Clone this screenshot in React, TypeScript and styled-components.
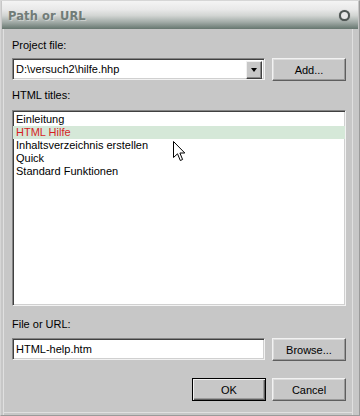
import React from "react";
import styled, { createGlobalStyle } from "styled-components";

const Global = createGlobalStyle`
  html, body { margin: 0; padding: 0; background: #c7c7c7; }
  * { box-sizing: border-box; }
`;

const Window = styled.div`
  width: 360px;
  height: 416px;
  display: flex;
  flex-direction: column;
  background: #c7c7c7;
  border: 1px solid #d6d6d6;
  border-right-color: #9a9a9a;
  border-bottom-color: #9a9a9a;
  font-family: "Liberation Sans", Arial, sans-serif;
  font-size: 11px;
  color: #000;
`;

const TitleBar = styled.div`
  height: 28px;
  margin: 0 1px;
  display: flex;
  align-items: center;
  justify-content: space-between;
  padding: 1px 8px 0 6px;
  background: linear-gradient(
    to bottom,
    #f4f4f4 0%,
    #e9e9e9 30%,
    #d2d5d3 52%,
    #a3aca8 75%,
    #66766f 100%
  );
`;

const Title = styled.span`
  font-family: "DejaVu Sans", Verdana, sans-serif;
  font-weight: bold;
  font-size: 11.5px;
  color: #717c78;
  letter-spacing: 0.1px;
  text-shadow: 1px 1px 0 rgba(255, 255, 255, 0.35);
`;

const CloseDot = styled.span`
  width: 11px;
  height: 11px;
  border-radius: 50%;
  border: 2.5px solid #4e5553;
  background: #e6e6e6;
  box-shadow: 0 0 1px rgba(0, 0, 0, 0.4);
`;

const Body = styled.div`
  flex: 1;
  display: flex;
  flex-direction: column;
  padding: 10px 13px 0 11px;
  box-shadow: inset 2px 0 0 #c7c7c7, inset 3px 0 0 #e0e0e0,
    inset -6px 0 0 #c7c7c7, inset -7px 0 0 #e0e0e0,
    inset 0 -2px 0 #c7c7c7, inset 0 -3px 0 #e0e0e0;
`;

const Label = styled.div<{ $mt?: number }>`
  margin-top: ${(p) => p.$mt ?? 0}px;
  height: 13px;
  line-height: 13px;
  white-space: nowrap;
`;

const Row = styled.div<{ $mt: number }>`
  margin-top: ${(p) => p.$mt}px;
  display: grid;
  grid-template-columns: 1fr 74px;
  column-gap: 7px;
  height: 23px;
`;

const Sunken = styled.div`
  position: relative;
  background: #fff;
  border: 1px solid;
  border-color: #858585 #f2f2f2 #f2f2f2 #858585;
  box-shadow: inset 1px 1px 0 #404040, inset -1px -1px 0 #d0d0d0;
`;

const Field = styled(Sunken)`
  height: 22px;
  display: flex;
  align-items: center;
  padding: 0 3px 0 3px;
  white-space: nowrap;
`;

const DropButton = styled.div`
  position: absolute;
  right: 2px;
  top: 2px;
  width: 16px;
  height: 18px;
  background: #c7c7c7;
  border: 1px solid;
  border-color: #f0f0f0 #404040 #404040 #f0f0f0;
  box-shadow: inset -1px -1px 0 #888;
  display: flex;
  align-items: center;
  justify-content: center;
  &::after {
    content: "";
    border-left: 3.5px solid transparent;
    border-right: 3.5px solid transparent;
    border-top: 4px solid #000;
  }
`;

const Button = styled.button<{ $default?: boolean }>`
  height: 23px;
  width: 74px;
  margin: 0;
  padding: 0;
  font-family: "Liberation Sans", Arial, sans-serif;
  font-size: 11px;
  color: #000;
  background: #c7c7c7;
  border: 1px solid;
  border-color: ${(p) =>
    p.$default ? "#000" : "#f2f2f2 #5e5e5e #5e5e5e #f2f2f2"};
  box-shadow: ${(p) =>
    p.$default
      ? "inset 1px 1px 0 #f2f2f2, inset -1px -1px 0 #5e5e5e, inset -2px -2px 0 #9a9a9a"
      : "inset -1px -1px 0 #9a9a9a, inset 1px 1px 0 #dcdcdc"};
`;

const List = styled(Sunken)<{ $mt: number }>`
  margin-top: ${(p) => p.$mt}px;
  height: 196px;
  padding: 2px 0 0 0;
`;

const Item = styled.div<{ $selected?: boolean }>`
  height: 13px;
  line-height: 13px;
  padding-left: 3px;
  white-space: nowrap;
  color: ${(p) => (p.$selected ? "#d61f1f" : "#000")};
  background: ${(p) => (p.$selected ? "#d5e8d8" : "transparent")};
`;

const Cursor = styled.svg`
  position: absolute;
  left: 160px;
  top: 30px;
  width: 13px;
  height: 21px;
`;

const Actions = styled.div`
  margin-top: 17px;
  display: flex;
  justify-content: flex-end;
  gap: 6px;
`;

const titles = [
  "Einleitung",
  "HTML Hilfe",
  "Inhaltsverzeichnis erstellen",
  "Quick",
  "Standard Funktionen",
];

export default function App() {
  return (
    <>
      <Global />
      <Window>
        <TitleBar>
          <Title>Path or URL</Title>
          <CloseDot />
        </TitleBar>
        <Body>
          <Label>Project file:</Label>
          <Row $mt={6}>
            <Field>
              D:\versuch2\hilfe.hhp
              <DropButton />
            </Field>
            <Button>Add...</Button>
          </Row>
          <Label $mt={8}>HTML titles:</Label>
          <List $mt={8}>
            {titles.map((t, i) => (
              <Item key={t} $selected={i === 1}>
                {t}
              </Item>
            ))}
            <Cursor viewBox="0 0 13 21">
              <path
                d="M0.5 0.5 L0.5 16.5 L4.5 12.8 L7.3 19.5 L9.6 18.5 L6.9 12 L11.8 12 Z"
                fill="#fff"
                stroke="#000"
                strokeWidth="1"
                strokeLinejoin="miter"
              />
            </Cursor>
          </List>
          <Label $mt={12}>File or URL:</Label>
          <Row $mt={7}>
            <Field>HTML-help.htm</Field>
            <Button>Browse...</Button>
          </Row>
          <Actions>
            <Button $default>OK</Button>
            <Button>Cancel</Button>
          </Actions>
        </Body>
      </Window>
    </>
  );
}
